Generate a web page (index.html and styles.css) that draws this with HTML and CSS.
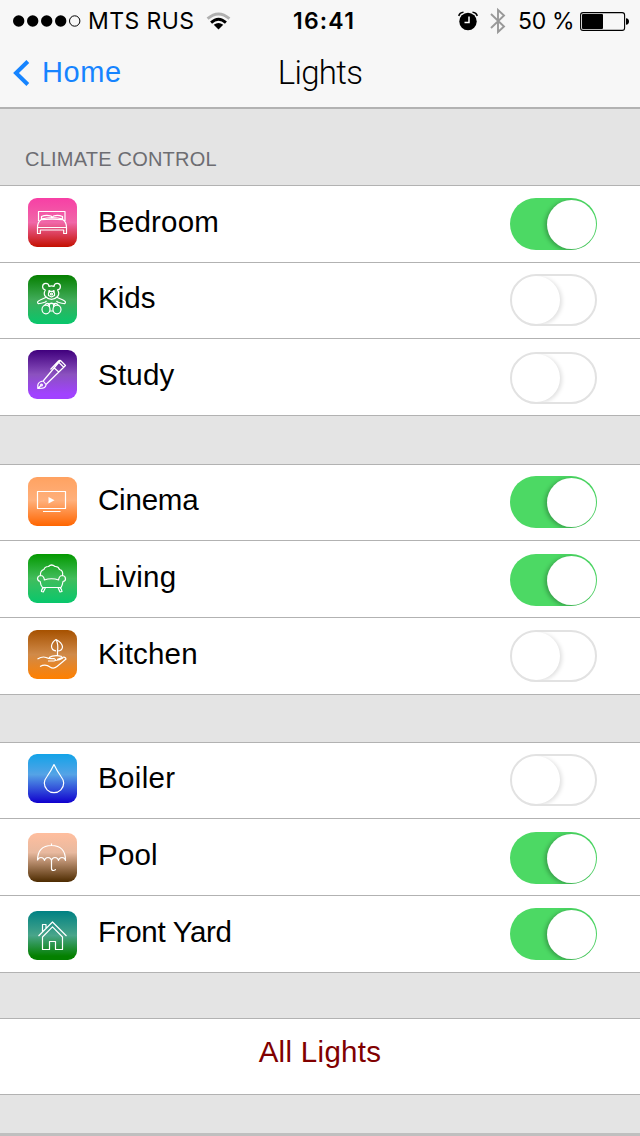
FILE: index.html
```html
<!DOCTYPE html>
<html lang="en">
<head>
<meta charset="utf-8">
<title>Lights</title>
<link rel="stylesheet" href="styles.css">
</head>
<body>
<header class="header">
  <div class="status">
    <svg class="signal" width="68" height="14" viewBox="0 0 68 14"><circle cx="5.700" cy="7" r="5.700"/><circle cx="19.700" cy="7" r="5.700"/><circle cx="33.700" cy="7" r="5.700"/><circle cx="47.700" cy="7" r="5.700"/><circle cx="61.700" cy="7" r="5.200" fill="none" stroke="#000"/></svg>
    <span class="carrier">MTS RUS</span>
    <svg class="wifi" width="25" height="19" viewBox="0 0 26 20" fill="none"><path d="M1.500 7Q13-3 24.500 7" stroke="#b0b0b0" stroke-width="3"/><path d="M5.200 11.200Q13 4 20.800 11.200" stroke="#000" stroke-width="3"/><path d="M8 13.500Q13 9.500 18 13.500L13 18.500Z" fill="#000"/></svg>
    <span class="time">16:41</span>
    <svg class="alarm" width="20" height="20" viewBox="0 0 20 20"><circle cx="10" cy="10.500" r="8.700"/><path d="M.8 5Q1.500 1.500 5.500 1.200M14.500 1.200Q18.500 1.500 19.200 5" fill="none" stroke="#000" stroke-width="1.500"/><path d="M11 5.500V11.500H6.500" fill="none" stroke="#fff" stroke-width="1.500"/></svg>
    <svg class="bluetooth" width="16" height="28" viewBox="0 0 16 28"><path d="M1 7L14 19.500L8 25V3L14 8.500L1 21" fill="none" stroke="#999" stroke-width="1.900"/></svg>
    <span class="percent">50 %</span>
    <svg class="battery" width="49" height="19" viewBox="0 0 49 19"><rect x=".6" y=".6" width="44" height="17.800" rx="2.500" fill="none" stroke="#000" stroke-width="1.100"/><rect x="2" y="2" width="21" height="15" rx="1"/><path d="M46 6.200Q49 6.500 49 9.500Q49 12.500 46 12.800Z"/></svg>
  </div>
  <nav class="nav">
    <a class="back"><svg width="18" height="26" viewBox="0 0 18 26"><path d="M14.800 1.500L3 13L14.800 24.500" fill="none" stroke="#1684ff" stroke-width="4"/></svg><span>Home</span></a>
    <h1 class="title">Lights</h1>
  </nav>
</header>
<main>
  <h2 class="caption">CLIMATE CONTROL</h2>
  <section class="group">
    <div class="row bedroom">
      <svg class="icon" viewBox="0 0 49 49"><path d="M10.500 23V13.500H37V23M13.500 21.500V18.500Q18 16.500 23 18L24.300 19.500L25.500 18Q30 16.500 34.500 18.500V21.500M13.500 21Q19 19.500 24.300 19.500Q30 19.500 34.500 21M9.500 29.500Q9.500 24 13 21.700Q24 20.500 35 21.700Q38.500 24 38.500 29.500ZM9.500 29.500V35.500H12.300V32H35.700V35.500H38.500V29.500"/></svg>
      <span class="label">Bedroom</span><span class="switch on"></span>
    </div>
    <div class="row short kids">
      <svg class="icon" viewBox="0 0 49 49"><path d="M17.500 14.800A3.200 3.200 0 1 1 21 11.400Q23.500 10.200 26 11.400A3.200 3.200 0 1 1 29.500 14.800Q32 19 29.500 21.500Q27 24.300 23.500 24.300Q20 24.300 17.500 21.500Q15 19 17.500 14.800M20.500 20.500V18L22 16.400H25L26.500 18V20.500L23.500 22ZM18.300 22.200L12.200 25Q8.500 26.500 10 28.500Q11 29 17.500 27L18.500 26M28.700 22.200L35 25Q38.500 26.500 37 28.500Q36 29 29.500 27L28.500 26M20 30Q23.500 26.500 27 30"/><circle cx="21.300" cy="16.200" r=".5"/><circle cx="25.700" cy="16.200" r=".5"/><circle cx="23.500" cy="19" r="1"/><ellipse cx="18" cy="34.500" rx="4" ry="4.300"/><ellipse cx="29" cy="34.500" rx="4" ry="4.300"/><path d="M17 30Q18 28 20.500 28.500Q22 30 21.300 32M30 30Q29 28 26.500 28.500Q25 30 25.700 32M22 36H25"/></svg>
      <span class="label">Kids</span><span class="switch"></span>
    </div>
    <div class="row study">
      <svg class="icon" viewBox="0 0 49 49"><path d="M15.200 31L31.500 11.500L32.500 10.500L37.500 15.500L18 34.500ZM26.500 18.200L30.500 21.800M22.500 19.500L30.500 11Q31.500 10 32.500 10.800M15.200 31L18 34.500Q18 37.500 14.500 38.200L9.800 38.500L9.800 35Q10.500 31.500 15.200 31M10 38.300L13 35.500M31 12.500L35.500 17"/><circle cx="13.500" cy="35" r=".9"/></svg>
      <span class="label">Study</span><span class="switch"></span>
    </div>
  </section>
  <section class="group">
    <div class="row short cinema">
      <svg class="icon" viewBox="0 0 49 49"><path d="M9.500 14.500H37.500V31.500H9.500ZM15 34.500H32.500"/><path d="M20.500 20L26.500 23.200L20.500 26.500Z" fill="#fff" stroke="none"/></svg>
      <span class="label">Cinema</span><span class="switch on"></span>
    </div>
    <div class="row living">
      <svg class="icon" viewBox="0 0 49 49"><path d="M12.500 21.500Q12 16.500 16 15.500Q16.500 12.500 20.500 12.500Q23.500 9.500 27 12.500Q30.500 12.300 31.500 15.500Q35.500 16.500 34.500 21.500M16.500 26.500Q16 21.500 12.500 21.500Q9.500 21.800 9.500 25Q10 27 12.200 27.500Q12.500 31 14.500 33.500H33Q34.500 31 35 27.500Q37.500 27 37.500 25Q37.500 21.800 34.500 21.500Q31 21.500 30.500 26.500M16.300 26Q23.500 23.500 30.700 26M15.500 33.500Q13 36 13.500 37.500L15.300 38L17.500 33.500M30 33.500L32 38L34 37.500Q34 35.500 32 33.500"/></svg>
      <span class="label">Living</span><span class="switch on"></span>
    </div>
    <div class="row kitchen">
      <svg class="icon" viewBox="0 0 49 49"><path d="M28 20.800Q23.500 20.500 23.500 16Q24 12 28 9.500Q34 12.500 34.500 17Q34 21 29.500 21M28 9.500Q30.500 14 29.500 21V26M9.500 29Q14.500 26 18 27.500Q21 29 26 28.500Q29 30 26 31H20M21 27.500Q26 24.500 34 26.500M29 29.500L34 27.500Q37.500 26.500 38 29L29 36.500Q25.500 39.500 22 37Q17.500 33.500 12 36.500M27 30.500Q32 30 35 28"/></svg>
      <span class="label">Kitchen</span><span class="switch"></span>
    </div>
  </section>
  <section class="group">
    <div class="row short boiler">
      <svg class="icon" viewBox="0 0 49 49"><path d="M26 10.500Q23 17 19 22.500Q16.300 26 16.300 29A9.700 9.700 0 0 0 35.700 29Q35.700 26 33 22.500Q29 17 26 10.500Z"/></svg>
      <span class="label">Boiler</span><span class="switch"></span>
    </div>
    <div class="row pool">
      <svg class="icon" viewBox="0 0 49 49"><path d="M23.500 10.500V12.500M9.500 27.500Q9.500 12.500 23.500 12.500Q37.500 12.500 37.500 27.500Q37 24.500 34 24.500Q31 24.500 30.500 27.500Q30 24.500 27 24.500Q24 24.500 23.500 27.500Q23 24.500 20 24.500Q17 24.500 16.500 27.500Q16 24.500 13 24.500Q10 24.500 9.500 27.500M23.500 27V35.500Q23.500 37.500 25.500 37.500T27.500 36"/></svg>
      <span class="label">Pool</span><span class="switch on"></span>
    </div>
    <div class="row yard">
      <svg class="icon" viewBox="0 0 49 49"><path d="M10.500 25L24.500 11L38.500 25M14.500 20.500V13.500H18V17M14.500 26V38.500H21.500V30.500H27.500V38.500H34.500V26L24.500 15.800Z"/></svg>
      <span class="label">Front Yard</span><span class="switch on"></span>
    </div>
  </section>
  <section class="group all"><button class="row short all-button">All Lights</button></section>
</main>
<div class="bottom-line"></div>
</body>
</html>
```
FILE: styles.css
```css
* { box-sizing: border-box; }
body { margin: 0; width: 640px; height: 1136px; display: flex; flex-direction: column; background: #e4e4e4; font-family: "Liberation Sans", Arial, sans-serif; color: #000; overflow: hidden; }
.header { height: 109px; background: #f7f7f7; border-bottom: 2px solid #b2b2b2; }
.status { height: 41px; padding-top: 1px; display: flex; align-items: center; font: 400 23px/40px Inter, sans-serif; white-space: nowrap; }
.status svg { flex: none; }
.signal { margin-left: 13px; }
.carrier { width: 118px; margin-left: 7px; letter-spacing: .4px; }
.time { width: 80px; margin-left: 62px; font-weight: 600; letter-spacing: 1.2px; }
.alarm { margin-left: 85px; }
.bluetooth { margin-left: 12px; }
.percent { width: 62px; margin-left: 12px; letter-spacing: -.3px; }
.nav { height: 66px; display: grid; grid-template-columns: 1fr auto 1fr; }
.back { display: flex; padding: 19px 0 0 13px; color: #1684ff; font-size: 29px; line-height: 24px; letter-spacing: .6px; gap: 11px; }
.title { margin: 0; font: 300 33px/64px Roboto, sans-serif; letter-spacing: -.7px; }
.caption { margin: 0; height: 76px; padding: 39px 0 0 25px; color: #6d6d72; font-size: 20px; font-weight: 400; line-height: 23px; letter-spacing: .22px; }
.group { border-top: 1px solid #b2b2b2; margin-bottom: 48px; }
.group:nth-of-type(2) { margin-bottom: 47px; }
.group:nth-of-type(3) { margin-bottom: 45px; }
.row { height: 77px; display: flex; align-items: flex-start; padding: 0 43px 0 28px; background: #fff; border-bottom: 1px solid #b2b2b2; }
.row.short { height: 76px; }
.icon { flex: none; width: 49px; height: 49px; margin-top: 12px; border-radius: 9px; fill: none; stroke: #fff; stroke-width: 1.2; stroke-linejoin: round; }
.label { flex: 1; margin-left: 21px; font-size: 29.5px; line-height: 72px; letter-spacing: .2px; }
.short .label { line-height: 70px; }
.switch { position: relative; flex: none; width: 87px; height: 52px; margin-top: 12px; border: 2px solid #e2e2e2; border-radius: 26px; overflow: hidden; }
.switch::after { content: ""; position: absolute; left: 0; top: 0; width: 48px; height: 48px; border-radius: 50%; background: #fff; box-shadow: 2px 1px 4px rgba(0, 0, 0, .13); }
.switch.on { border: 0; background: #4cd964; }
.switch.on::after { left: 37px; top: 2px; width: 49px; height: 49px; box-shadow: -2px 1px 4px rgba(0, 0, 0, .28); }
.bedroom .icon { background: linear-gradient(#f73fa5, #f067a8 50%, #c41000); }
.kids .icon { background: linear-gradient(#057f00, #40ab58 50%, #08c76c); }
.kids .label { letter-spacing: 0; }
.kids .switch, .cinema .switch, .boiler .switch { margin-top: 11px; }
.study .icon { margin-top: 11px; background: linear-gradient(#40007d, #8b51bf 50%, #a142ff 90%); }
.study .switch, .living .switch, .pool .switch { margin-top: 13px; }
.cinema .icon { background: linear-gradient(#ffa261, #ffb07b 48%, #ff6500); }
.cinema .label { letter-spacing: -.2px; }
.living .icon { margin-top: 13px; background: linear-gradient(#049900, #42bd5c 50%, #08c76c); }
.kitchen .icon { background: linear-gradient(#a65100, #d08a49 50%, #ff8000); }
.boiler .icon { margin-top: 11px; background: linear-gradient(#12a3e8, #55a3e6 42%, #1000ce); }
.boiler .label { letter-spacing: .35px; }
.pool .icon { margin-top: 14px; background: linear-gradient(#ffbe9e, #e8b99f 40%, #4d2b00); }
.yard .icon { margin-top: 15px; background: linear-gradient(#008183, #49a58a 50%, #048000 92%); }
.yard .label { letter-spacing: -.3px; }
.all { margin-bottom: 0; }
.all-button { width: 100%; justify-content: center; padding: 0; border-width: 0 0 1px; color: #800000; font: 29.5px/66px "Liberation Sans", Arial, sans-serif; letter-spacing: .3px; }
.bottom-line { margin-top: auto; height: 3px; background: #bfbfbf; }
```
